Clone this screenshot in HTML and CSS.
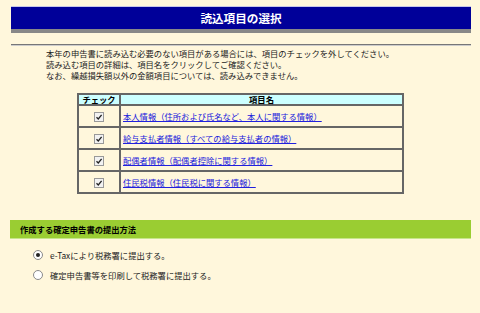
FILE: index.html
```html
<!DOCTYPE html>
<html lang="ja">
<head>
	<meta charset="UTF-8">
	<title>読込項目の選択</title>
	<link rel="stylesheet" href="styles.css">
</head>
<body>
	<div id="page">
		<h1 class="title">読込項目の選択</h1>
		<div class="rule"></div>
		<p class="guide">
			本年の申告書に読み込む必要のない項目がある場合には、項目のチェックを外してください。<br>
			読み込む項目の詳細は、項目名をクリックしてご確認ください。<br>
			なお、繰越損失額以外の金額項目については、読み込みできません。
		</p>
		<table class="items">
			<tr>
				<th class="col-check">チェック</th>
				<th>項目名</th>
			</tr>
			<tr>
				<td class="col-check"><span class="cbox"><svg viewBox="0 0 8 8"><path d="M1.5 4.2 L3.3 6 L6.6 1.8" fill="none" stroke="#222" stroke-width="1.3"/></svg></span></td>
				<td><a href="#">本人情報（住所および氏名など、本人に関する情報）</a></td>
			</tr>
			<tr>
				<td class="col-check"><span class="cbox"><svg viewBox="0 0 8 8"><path d="M1.5 4.2 L3.3 6 L6.6 1.8" fill="none" stroke="#222" stroke-width="1.3"/></svg></span></td>
				<td><a href="#">給与支払者情報（すべての給与支払者の情報）</a></td>
			</tr>
			<tr>
				<td class="col-check"><span class="cbox"><svg viewBox="0 0 8 8"><path d="M1.5 4.2 L3.3 6 L6.6 1.8" fill="none" stroke="#222" stroke-width="1.3"/></svg></span></td>
				<td><a href="#">配偶者情報（配偶者控除に関する情報）</a></td>
			</tr>
			<tr>
				<td class="col-check"><span class="cbox"><svg viewBox="0 0 8 8"><path d="M1.5 4.2 L3.3 6 L6.6 1.8" fill="none" stroke="#222" stroke-width="1.3"/></svg></span></td>
				<td><a href="#">住民税情報（住民税に関する情報）</a></td>
			</tr>
		</table>
		<h2 class="section">作成する確定申告書の提出方法</h2>
		<ul class="options">
			<li><span class="radio on"></span>e-Taxにより税務署に提出する。</li>
			<li><span class="radio"></span>確定申告書等を印刷して税務署に提出する。</li>
		</ul>
	</div>
</body>
</html>
```

FILE: styles.css
```css
* {
	margin: 0;
	padding: 0;
}
body {
	background-color: #fff7dc;
	font-family: "Noto Sans CJK JP", "Liberation Sans", sans-serif;
	font-size: 8.3px;
	color: #222;
}
#page {
	width: 460px;
	margin-left: 11px;
	padding-top: 6px;
}
.title {
	background-color: #000099;
	border-top: 1px solid #c8c8e8;
	border-bottom: 4px solid #888;
	height: 22px;
	line-height: 22px;
	color: #fff;
	font-size: 11.6px;
	font-weight: bold;
	text-align: center;
}
.rule {
	margin-top: 11px;
	border-top: 1px solid #777;
	border-bottom: 1px solid #ccc;
}
.guide {
	margin-top: 2px;
	padding-left: 35px;
	line-height: 11px;
}
.items {
	margin: 12px 0 0 66px;
	width: 327px;
	border-collapse: collapse;
	border: 2px solid #666;
}
.items th {
	background-color: #ccffff;
	height: 9px;
	line-height: 9px;
	border: 2px solid #666;
	font-weight: bold;
	color: #000;
}
.items td {
	height: 20px;
	border: 2px solid #666;
	padding-left: 2px;
}
.items .col-check {
	width: 40px;
	text-align: center;
	padding-left: 0;
}
.cbox {
	display: inline-block;
	width: 8px;
	height: 8px;
	border: 1px solid #999;
	background-color: #f2f2f2;
	vertical-align: middle;
}
.cbox svg {
	display: block;
	width: 8px;
	height: 8px;
}
.items a {
	color: #2020dd;
	text-decoration: underline;
}
.section {
	margin: 26px 0 0 -1px;
	width: 461px;
	height: 19px;
	line-height: 19px;
	background-color: #9acd32;
	border-bottom: 1px solid #c6e68a;
	padding-left: 10px;
	box-sizing: border-box;
	font-size: 8.3px;
	font-weight: bold;
	color: #000;
}
.options {
	list-style: none;
	margin-top: 11px;
	padding-left: 22px;
}
.options li {
	display: flex;
	align-items: center;
	height: 10px;
	margin-bottom: 10px;
}
.radio {
	width: 8px;
	height: 8px;
	border: 1px solid #8a8a8a;
	border-radius: 50%;
	background-color: #fff;
	margin-right: 7px;
	display: flex;
	align-items: center;
	justify-content: center;
}
.radio.on::after {
	content: "";
	width: 4px;
	height: 4px;
	border-radius: 50%;
	background-color: #222;
}
```
